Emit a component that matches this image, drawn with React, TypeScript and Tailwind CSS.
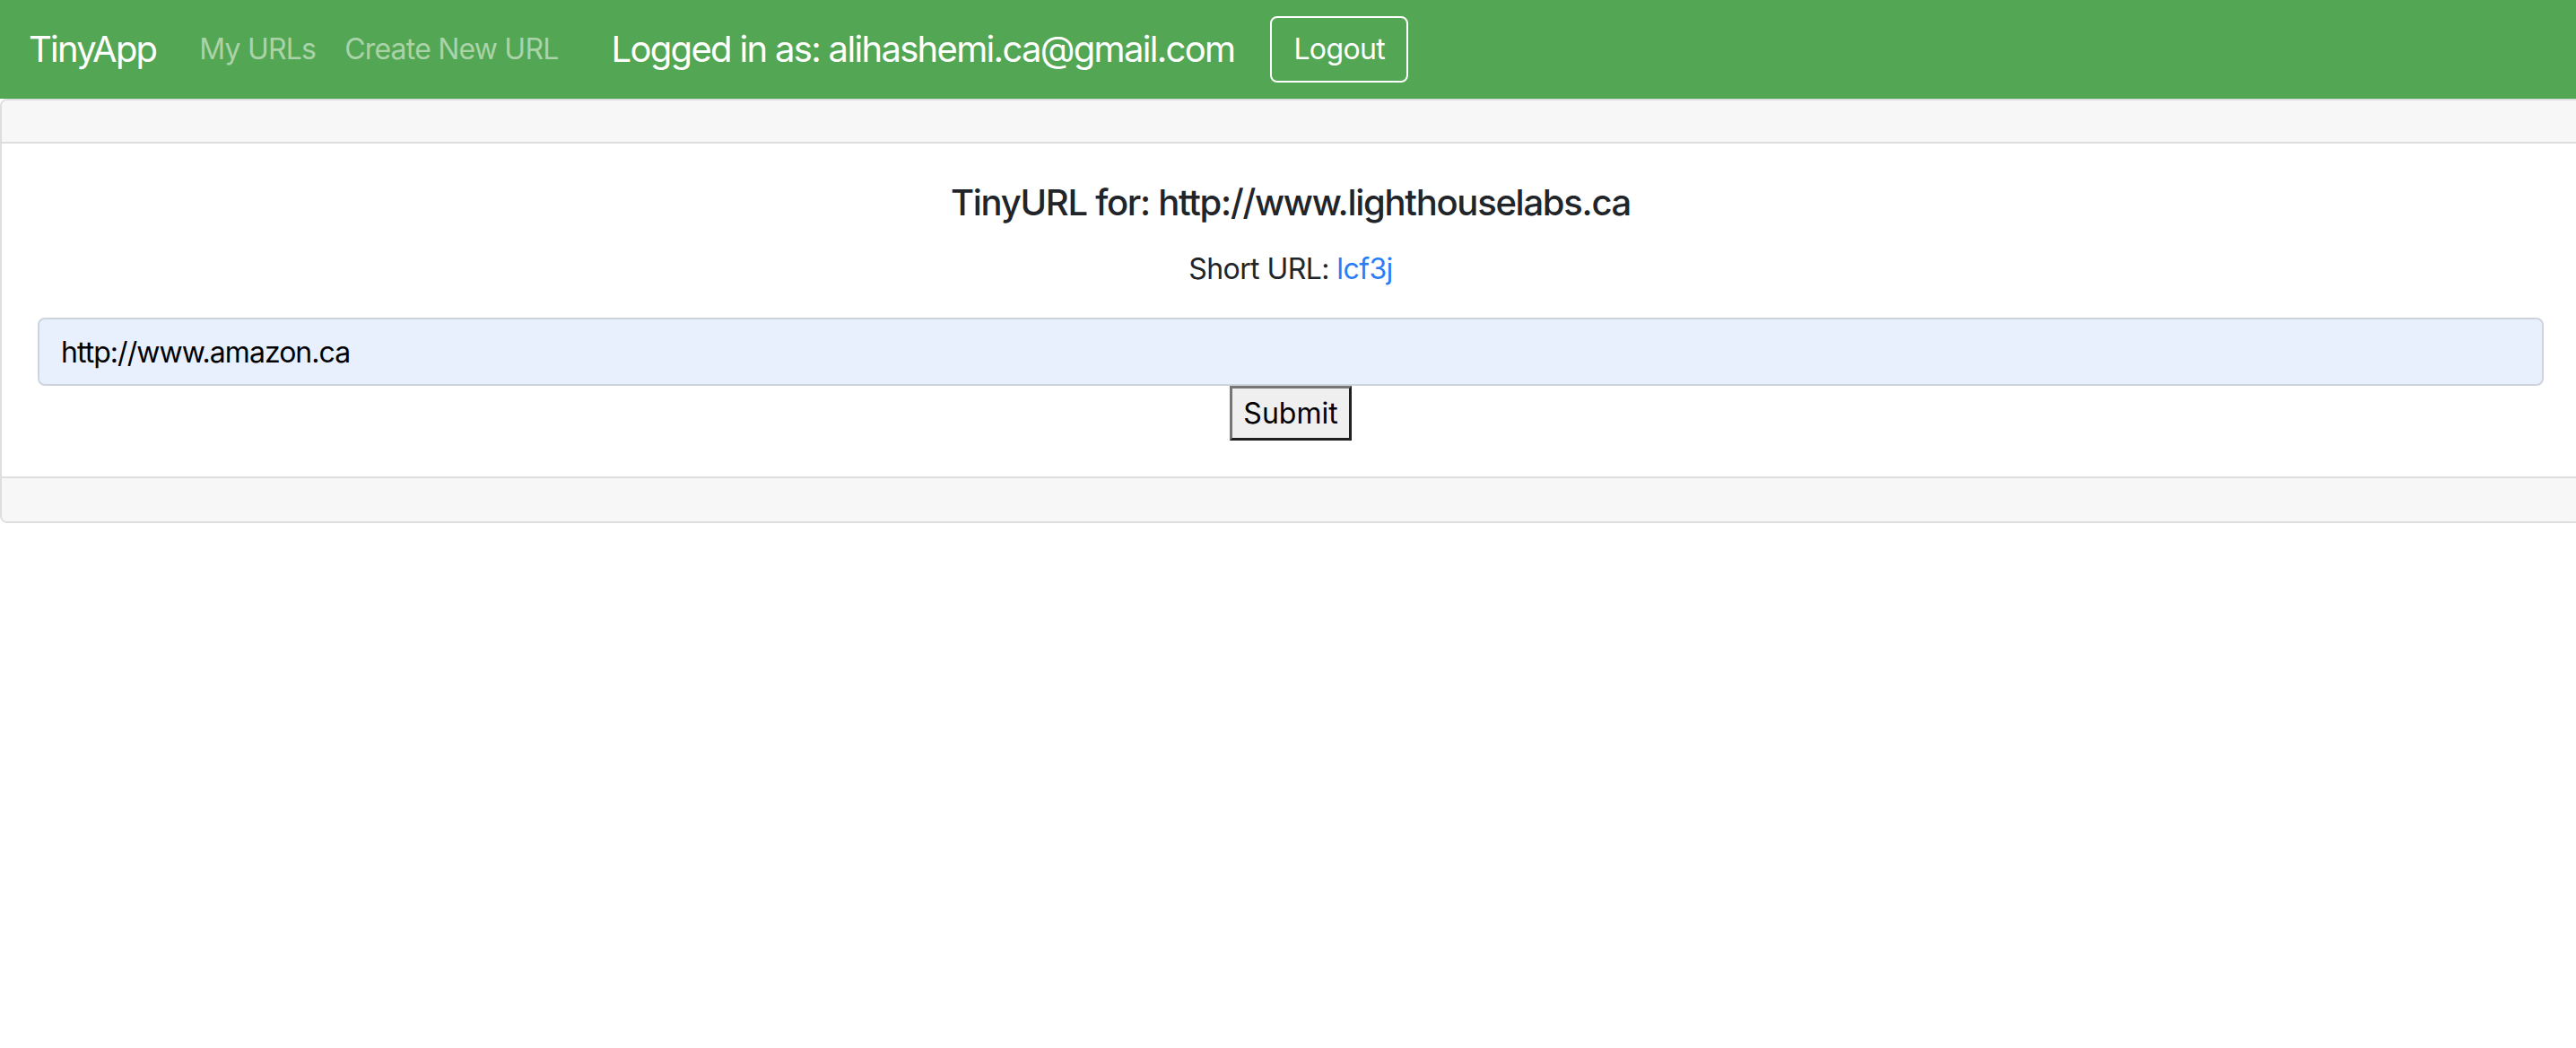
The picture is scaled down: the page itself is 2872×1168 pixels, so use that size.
import React from "react";

const FONT = { fontFamily: "Inter, 'Noto Sans', 'Liberation Sans', sans-serif" };

function Navbar() {
  return (
    <nav className="flex h-[110px] items-center bg-[#53a653] px-[32px]">
      <a className="mr-[32px] text-[40px] leading-[60px] tracking-[-0.045em] text-white">TinyApp</a>
      <div className="flex items-center">
        <a className="px-[16px] text-[32px] leading-[48px] tracking-[-0.025em] text-[#aad3a9]">My URLs</a>
        <a className="px-[16px] text-[32px] leading-[48px] tracking-[-0.025em] text-[#aad3a9]">Create New URL</a>
      </div>
      <span className="ml-[43px] text-[40px] leading-[60px] tracking-[-0.042em] text-white">
        Logged in as: alihashemi.ca@gmail.com
      </span>
      <button className="ml-[40px] h-[74px] rounded-[8px] border-2 border-white px-[24px] text-[32px] tracking-[-0.02em] text-white">
        Logout
      </button>
    </nav>
  );
}

export default function App() {
  return (
    <div className="min-h-screen overflow-hidden bg-white text-[#212529]" style={FONT}>
      <Navbar />
      <div className="mr-[-6px] rounded-[8px] border-2 border-[#dedede]">
        <div className="h-[48px] rounded-t-[6px] border-b-2 border-[#dedede] bg-[#f7f7f7]" />
        <div className="px-[40px] pt-[42px] pb-[40px] text-center">
          <h5 className="mb-[26px] text-[40px] font-medium leading-[48px] tracking-[-0.032em]">
            TinyURL for: http://www.lighthouselabs.ca
          </h5>
          <p className="mb-[30px] text-[32px] leading-[48px] tracking-[-0.018em]">
            Short URL: <a className="text-[#2a7df6]">lcf3j</a>
          </p>
          <form className="flex flex-col items-center">
            <input
              readOnly
              value="http://www.amazon.ca"
              className="h-[76px] w-full rounded-[8px] border-2 border-[#ced4da] bg-[#e8f0fe] px-[24px] text-[32px] tracking-[-0.03em] text-black outline-none"
            />
            <button
              type="button"
              className="h-[61px] border-[3px] border-t-[#767676] border-l-[#767676] border-r-[#1f1f1f] border-b-[#1f1f1f] bg-[#efefef] px-[12px] text-[32px] text-black"
            >
              Submit
            </button>
          </form>
        </div>
        <div className="h-[50px] rounded-b-[6px] border-t-2 border-[#dedede] bg-[#f7f7f7]" />
      </div>
    </div>
  );
}
